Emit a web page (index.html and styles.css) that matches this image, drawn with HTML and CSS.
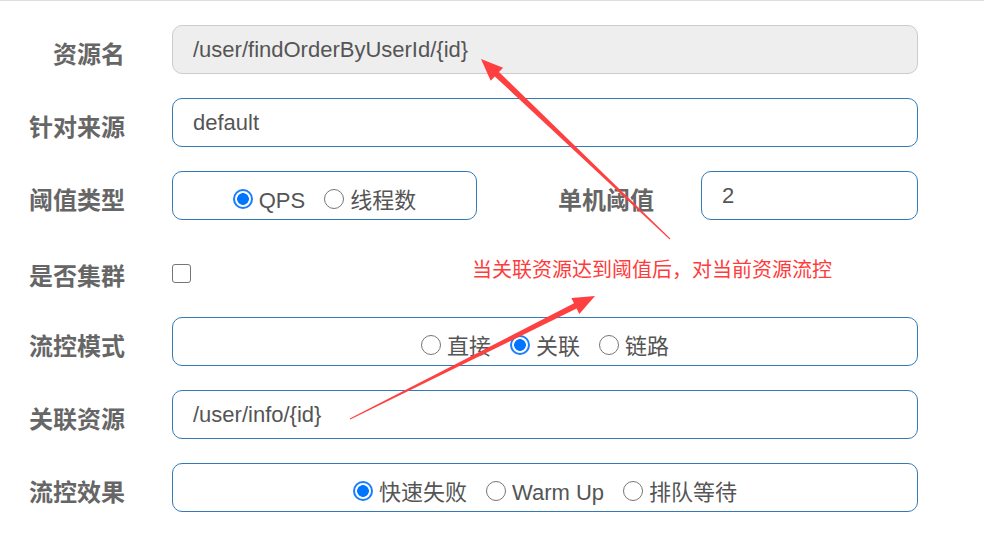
FILE: index.html
```html
<!DOCTYPE html>
<html lang="zh-CN">
<head>
<meta charset="utf-8">
<title>流控规则</title>
<link rel="stylesheet" href="styles.css">
</head>
<body>
<div class="page">
  <form class="form">
    <label class="label">资源名</label>
    <input class="field disabled" type="text" value="/user/findOrderByUserId/{id}" readonly>

    <label class="label">针对来源</label>
    <input class="field" type="text" value="default" readonly>

    <label class="label">阈值类型</label>
    <div class="split">
      <div class="radio-box small">
        <label class="opt"><input type="radio" name="grade" checked><span>QPS</span></label>
        <label class="opt"><input type="radio" name="grade"><span>线程数</span></label>
      </div>
      <label class="label inner">单机阈值</label>
      <input class="field short" type="text" value="2" readonly>
    </div>

    <label class="label lower">是否集群</label>
    <div class="check-cell"><input class="check" type="checkbox"></div>

    <label class="label">流控模式</label>
    <div class="radio-box">
      <label class="opt"><input type="radio" name="mode"><span>直接</span></label>
      <label class="opt"><input type="radio" name="mode" checked><span>关联</span></label>
      <label class="opt"><input type="radio" name="mode"><span>链路</span></label>
    </div>

    <label class="label">关联资源</label>
    <input class="field" type="text" value="/user/info/{id}" readonly>

    <label class="label">流控效果</label>
    <div class="radio-box">
      <label class="opt"><input type="radio" name="effect" checked><span>快速失败</span></label>
      <label class="opt"><input type="radio" name="effect"><span>Warm Up</span></label>
      <label class="opt"><input type="radio" name="effect"><span>排队等待</span></label>
    </div>
  </form>

  <div class="note">当关联资源达到阈值后，对当前资源流控</div>

  <svg class="arrows" width="984" height="544" viewBox="0 0 984 544">
    <polygon fill="#ff4040" points="481,59 503.1,67.7 499.0,72.0 670.3,238.6 669.7,239.4 494.8,76.4 490.7,80.7"/>
    <polygon fill="#ff4040" points="595,296 579.3,313.9 576.6,308.6 350.2,419.4 349.8,418.6 574.0,303.2 571.3,297.9"/>
  </svg>
</div>
</body>
</html>
```

FILE: styles.css
```css
html, body {
  margin: 0;
  padding: 0;
  background: #fff;
}

.page {
  position: relative;
  width: 984px;
  height: 544px;
  border-top: 1px solid #dedede;
  box-sizing: border-box;
  overflow: hidden;
  font-family: "Liberation Sans", "Noto Sans CJK SC", sans-serif;
}

.form {
  display: grid;
  grid-template-columns: 125px 746px;
  grid-auto-rows: 49px;
  column-gap: 47px;
  row-gap: 24px;
  padding-top: 24px;
  margin: 0;
}

.label {
  display: flex;
  align-items: center;
  justify-content: flex-end;
  padding-top: 5px;
  box-sizing: border-box;
  font-family: "Noto Sans CJK SC", sans-serif;
  font-weight: bold;
  font-size: 24px;
  color: #666;
  white-space: nowrap;
}

.label.lower {
  padding-top: 12px;
}

.field {
  box-sizing: border-box;
  height: 49px;
  margin: 0;
  padding: 0 20px;
  border: 1px solid #337ab7;
  border-radius: 10px;
  background: #fff;
  font-family: "Liberation Sans", "Noto Sans CJK SC", sans-serif;
  font-size: 22px;
  color: #555;
  outline: none;
  width: 100%;
}

.field.disabled {
  background: #eee;
  border-color: #ccc;
}

.split {
  display: flex;
  align-items: stretch;
}

.split .label.inner {
  flex: 1;
}

.field.short {
  width: 217px;
  flex: none;
  margin-left: 47px;
}

.radio-box {
  box-sizing: border-box;
  height: 49px;
  border: 1px solid #337ab7;
  border-radius: 10px;
  display: flex;
  align-items: center;
  justify-content: center;
  gap: 19px;
  padding-top: 6px;
}

.radio-box.small {
  width: 305px;
  flex: none;
}

.opt {
  display: flex;
  align-items: center;
  gap: 6px;
  font-size: 22px;
  color: #555;
  white-space: nowrap;
}

.opt span {
  display: block;
  line-height: 30px;
  height: 30px;
  padding-top: 4px;
}

.opt input {
  -webkit-appearance: none;
  appearance: none;
  box-sizing: border-box;
  width: 20px;
  height: 20px;
  margin: 0;
  border: 1px solid #767676;
  border-radius: 50%;
  background: #fff;
}

.opt input:checked {
  border: 2px solid #1a7cff;
  background: radial-gradient(circle, #0075ff 0, #0075ff 5.5px, #fff 6.2px);
}

.check-cell {
  display: flex;
  align-items: center;
  padding-top: 10px;
  box-sizing: border-box;
}

.check {
  -webkit-appearance: none;
  appearance: none;
  box-sizing: border-box;
  width: 19px;
  height: 19px;
  margin: 0;
  border: 1px solid #767676;
  border-radius: 3px;
  background: #fff;
}

.note {
  position: absolute;
  left: 472px;
  top: 254px;
  font-family: "Noto Sans CJK SC", sans-serif;
  font-size: 20px;
  line-height: 28px;
  color: #ff3b3b;
  white-space: nowrap;
}

.arrows {
  position: absolute;
  left: 0;
  top: -1px;
  pointer-events: none;
}
```
